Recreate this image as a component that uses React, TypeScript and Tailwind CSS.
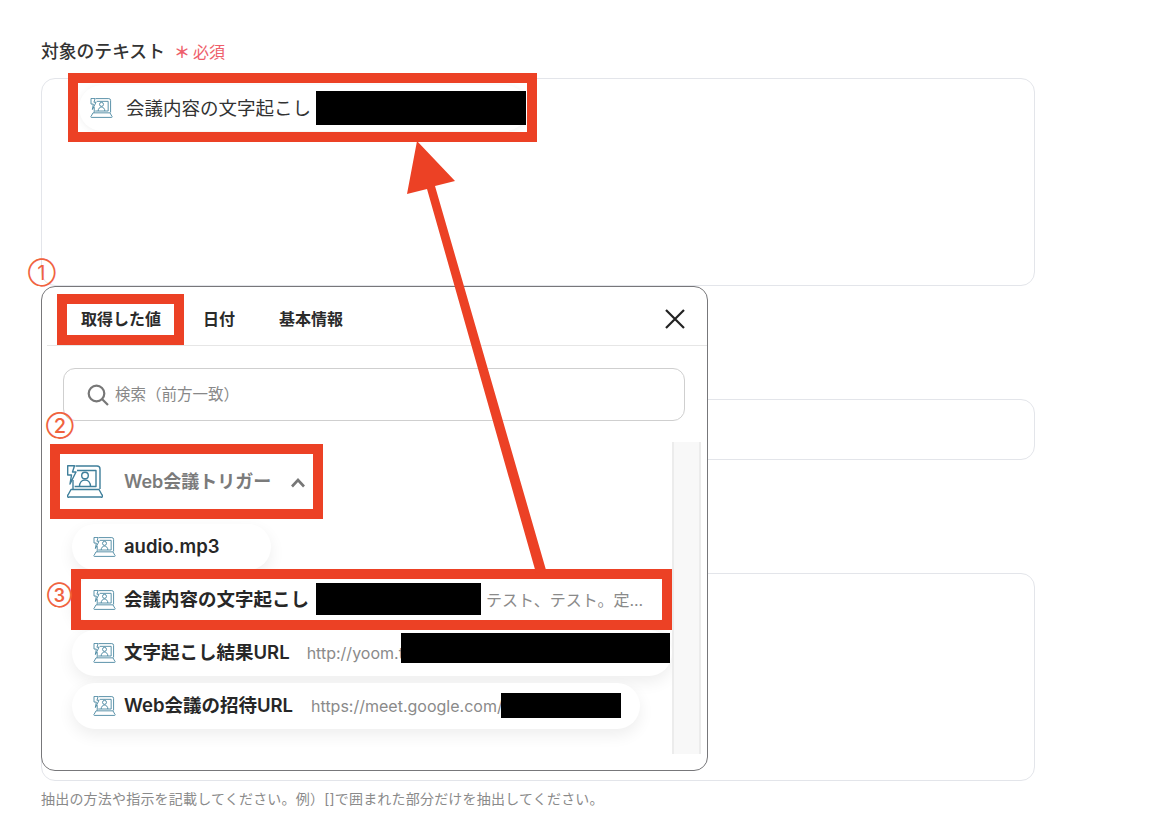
import React from "react";

function MeetIcon({ className }: { className: string }) {
  return (
    <svg viewBox="0 0 36 33" fill="none" stroke="#3f7f9b" strokeWidth="1.4" strokeLinejoin="round" className={className}>
      <path d="M0.7 0.7H7.5L5.5 7H9L3 19L4.5 10H0.7Z" />
      <path d="M8.5 1H30a3 3 0 0 1 3 3V24" />
      <path d="M6 15V24" />
      <path d="M10 5.5H29V21.5H7.6" />
      <circle cx="18" cy="10.5" r="3.3" />
      <path d="M12.5 21.5c0-4 2.5-6.5 5.5-6.5s5.5 2.5 5.5 6.5" />
      <path d="M4 24.5H32L35 30a1 1 0 0 1-1 2H2a1 1 0 0 1-1-2Z" />
    </svg>
  );
}

function Row({ label, children, className }: { label: string; children?: React.ReactNode; className: string }) {
  return (
    <div className={`flex h-[46px] shrink-0 items-center rounded-full bg-white pl-[21px] shadow-[0_6px_16px_rgba(0,0,0,0.07)] ${className}`}>
      <MeetIcon className="mr-[8px] h-[20px] w-[23px] shrink-0" />
      <span className="text-[18.5px] font-semibold whitespace-nowrap text-[#272727]">{label}</span>
      {children}
    </div>
  );
}

export default function App() {
  return (
    <div className="relative h-[822px] w-[1154px] overflow-hidden bg-white pl-[41px] [font-family:Inter,'Noto_Sans_CJK_JP',sans-serif]">
      <div className="flex h-[78px] w-[994px] items-center pt-[26px]">
        <span className="text-[17.8px] font-medium text-[#333]">対象のテキスト</span>
        <span className="ml-[9px] text-[16px] font-bold text-[#ee5f6b]">＊</span>
        <span className="ml-[3px] text-[16px] text-[#ee5f6b]">必須</span>
      </div>

      <div className="h-[208px] w-[994px] rounded-[14px] border border-[#e3e5ea] pl-[37px] pt-[6px]">
        <div className="flex h-[46px] w-[449px] items-center rounded-full bg-white pl-[11px] shadow-[0_1px_6px_rgba(0,0,0,0.06)]">
          <MeetIcon className="mr-[13px] h-[20px] w-[23px] shrink-0" />
          <span className="mt-[2px] text-[18.5px] whitespace-nowrap text-[#333]">会議内容の文字起こし</span>
          <div className="ml-[5px] h-[34px] w-[210px] shrink-0 bg-black" />
        </div>
      </div>
      <div className="mt-[113px] h-[61px] w-[994px] rounded-[14px] border border-[#e3e5ea]" />
      <div className="mt-[113px] h-[208px] w-[994px] rounded-[14px] border border-[#e3e5ea]" />
      <p className="mt-[9px] text-[14px] leading-[18px] tracking-[0.2px] text-[#8a8a8a]">
        抽出の方法や指示を記載してください。例）[]で囲まれた部分だけを抽出してください。
      </p>

      {/* popover */}
      <div className="absolute left-[41px] top-[286px] flex h-[485px] w-[667px] flex-col rounded-[14px] border border-[#77777a] bg-white pl-[5px]">
        <div className="flex h-[59px] items-center border-b border-[#e6e6e6] pt-[6px] text-[16px] font-semibold text-[#2b2b2b]">
          <span className="ml-[34px]">取得した値</span>
          <span className="ml-[42px]">日付</span>
          <span className="ml-[44px]">基本情報</span>
          <svg viewBox="0 0 20 20" stroke="#222" strokeWidth="2.2" className="ml-auto mr-[22px] h-[20px] w-[20px]">
            <path d="M1 1L19 19M19 1L1 19" />
          </svg>
        </div>
        <div className="ml-[16px] mt-[22px] flex h-[53px] w-[622px] items-center rounded-[12px] border border-[#cfcfcf] pl-[23px]">
          <svg viewBox="0 0 22 22" fill="none" stroke="#777" strokeWidth="2.2" className="h-[22px] w-[22px]">
            <circle cx="9.5" cy="9.5" r="7.8" />
            <path d="M15 15L21 21" />
          </svg>
          <span className="ml-[6px] text-[15.5px] text-[#888]">検索（前方一致）</span>
        </div>
        <div className="mt-[21px] flex h-[312px] w-[654px]">
          <div className="flex h-full w-[625px] flex-col overflow-hidden pl-[25px]">
            <div className="flex h-[82px] shrink-0 items-center pb-[4px]">
              <MeetIcon className="-ml-[5px] mr-[21px] h-[33px] w-[36px] shrink-0" />
              <span className="text-[18px] font-semibold whitespace-nowrap text-[#7b7b7b]">Web会議トリガー</span>
              <svg viewBox="0 0 14 10" fill="none" stroke="#777" strokeWidth="2.6" className="ml-[20px] mt-[4px] h-[10px] w-[14px]">
                <path d="M1 8.5L7 2L13 8.5" />
              </svg>
            </div>
            <div className="flex flex-col gap-[7px]">
              <Row label="audio.mp3" className="w-[199px]" />
              <Row label="会議内容の文字起こし" className="w-[600px]">
                <div className="-mt-[2px] ml-[7px] h-[32px] w-[165px] shrink-0 bg-black" />
                <span className="ml-[5px] text-[16px] whitespace-nowrap text-[#8a8a8a]">テスト、テスト。定...</span>
              </Row>
              <Row label="文字起こし結果URL" className="w-[600px]">
                <span className="ml-[17px] w-[94px] text-[16px] whitespace-nowrap text-[#8a8a8a]">http://yoom.t</span>
                <div className="-mt-[10px] h-[30px] w-[269px] shrink-0 bg-black" />
              </Row>
              <Row label="Web会議の招待URL" className="w-[568px]">
                <span className="ml-[18px] w-[190px] text-[16px] whitespace-nowrap text-[#8a8a8a]">https://meet.google.com/</span>
                <div className="-mt-[2px] h-[25px] w-[120px] shrink-0 bg-black" />
              </Row>
            </div>
          </div>
          <div className="h-full w-[29px] border-x-2 border-[#ececec] bg-[#f8f8f8]" />
        </div>
      </div>

      {/* annotations */}
      <div className="absolute left-[68px] top-[73px] h-[69px] w-[469px] border-[10px] border-[#ec4125]" />
      <div className="absolute left-[57px] top-[294px] h-[51px] w-[127px] border-[10px] border-[#ec4125]" />
      <div className="absolute left-[50px] top-[444px] h-[75px] w-[273px] border-[10px] border-[#ec4125]" />
      <div className="absolute left-[71px] top-[569px] h-[61px] w-[601px] border-[10px] border-[#ec4125]" />
      <span className="absolute left-[28px] top-[257px] text-[20px] leading-[32px] text-[#f0633f]">①</span>
      <span className="absolute left-[46px] top-[410px] text-[20px] leading-[32px] font-medium text-[#f0633f]">②</span>
      <span className="absolute left-[47px] top-[580px] text-[18px] leading-[32px] font-semibold text-[#f0633f]">③</span>
      <svg viewBox="0 0 1154 822" fill="#ec4125" className="absolute left-0 top-0 h-[822px] w-[1154px]">
        <path d="M417 141L455 181L435 186L546 570L536 573L427 189L407 194Z" />
      </svg>
    </div>
  );
}
